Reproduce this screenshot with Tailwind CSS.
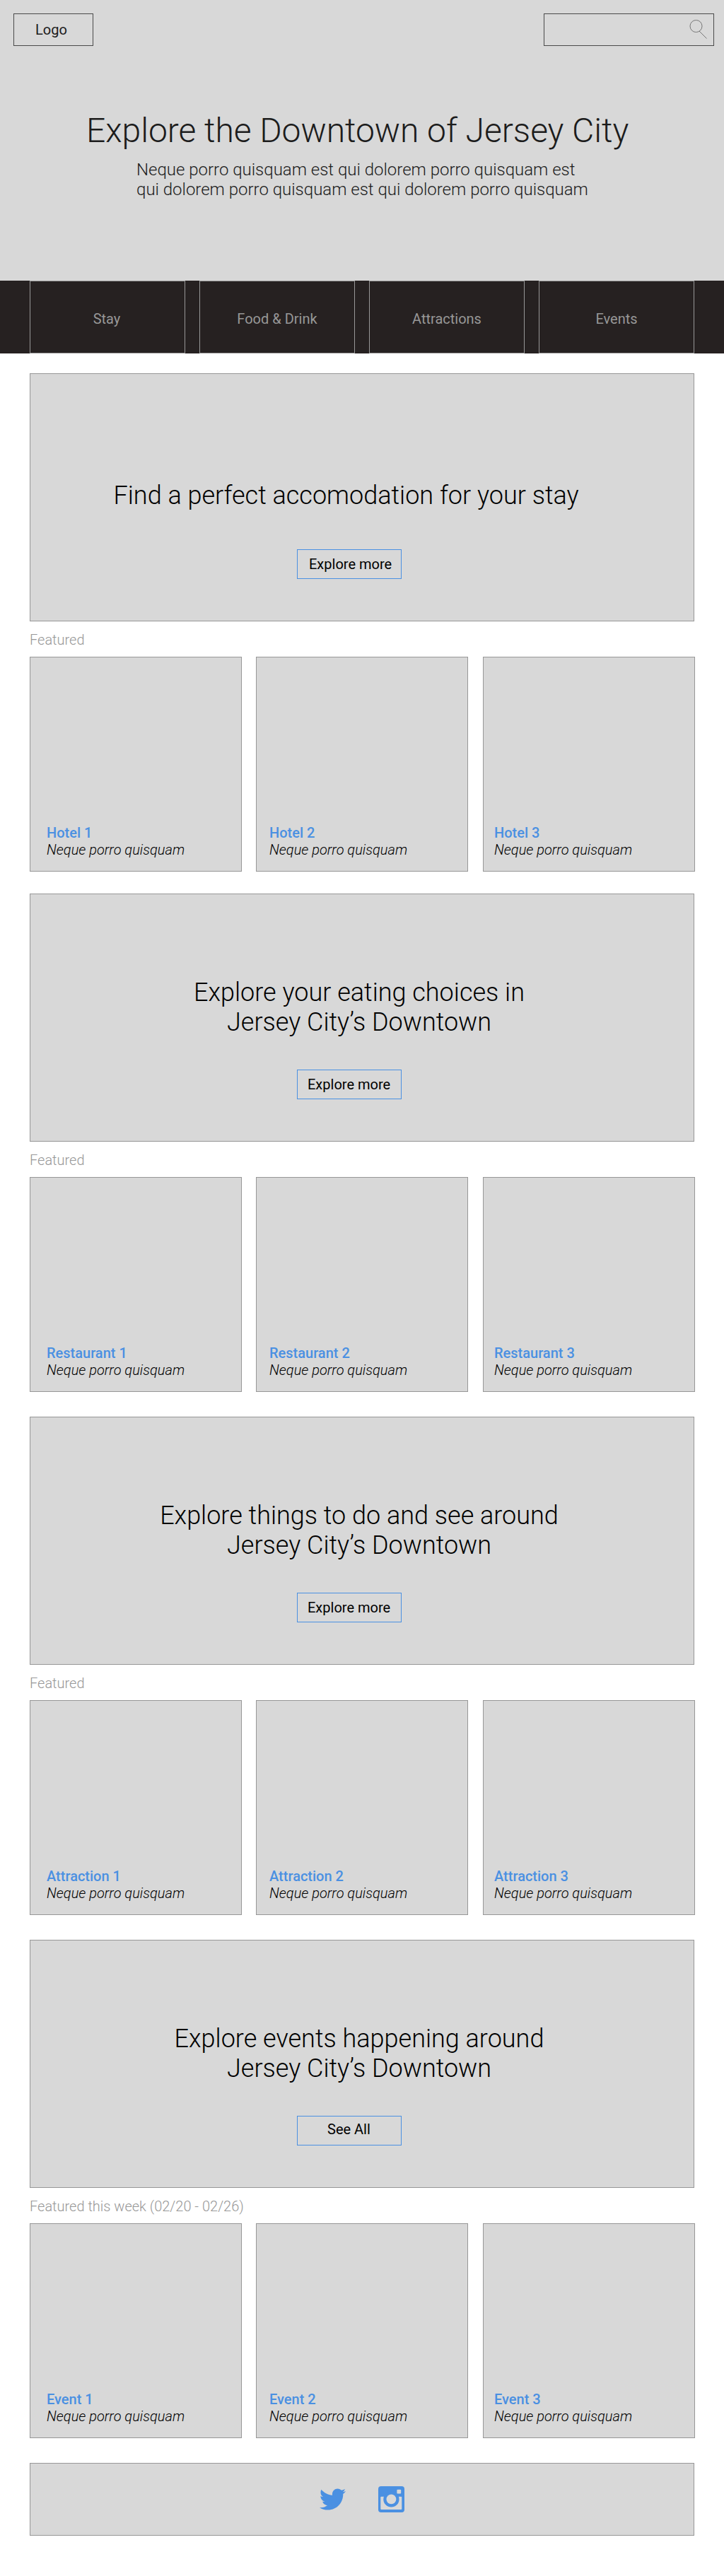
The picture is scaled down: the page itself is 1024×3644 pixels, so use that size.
<!DOCTYPE html>
<html lang="en">
<head>
<meta charset="utf-8">
<title>Explore the Downtown of Jersey City</title>
<script src="https://cdn.jsdelivr.net/npm/@tailwindcss/browser@4"></script>
</head>
<body class="w-[1024px] h-[3644px] bg-white font-['Roboto',sans-serif] text-xl leading-6 text-black">
  <header class="h-[397px] bg-[#d8d8d8] text-[#1c1c1c]">
    <div class="flex justify-between pt-[19px] pl-[19px] pr-[14px]">
      <a class="w-[113px] h-[46px] border border-[#4a4a4a] pl-[30px] pt-[10px]">Logo</a>
      <div class="w-[241px] h-[46px] border border-[#4a4a4a] flex justify-end pt-[7px] pr-[8px]">
        <svg class="w-[27px] h-[29px]" viewBox="0 0 27 29" fill="none" stroke="#777" stroke-width="1"><circle cx="10.5" cy="10" r="8.5"/><path d="M15 17 25.5 27.5"/></svg>
      </div>
    </div>
    <h1 class="mt-[92px] pl-[122px] text-[48px] leading-[56px] font-light tracking-[-0.03px] whitespace-nowrap">Explore the Downtown of Jersey City</h1>
    <p class="mt-[13px] pl-[193px] text-2xl leading-7 font-light tracking-[-0.01px] whitespace-nowrap">Neque porro quisquam est qui dolorem porro quisquam est<br>qui dolorem porro quisquam est qui dolorem porro quisquam</p>
  </header>

  <nav class="h-[103px] bg-[#262121] px-[42px] grid grid-cols-4 gap-5 text-center text-[#979797]">
    <a class="border border-[#979797] pt-[41px] pr-[2px]">Stay</a>
    <a class="border border-[#979797] pt-[41px]">Food &amp; Drink</a>
    <a class="border border-[#979797] pt-[41px]">Attractions</a>
    <a class="border border-[#979797] pt-[41px]">Events</a>
  </nav>

  <main class="pl-[42px]">
    <section class="h-[736px] pt-[28px]">
      <div class="w-[940px] h-[351px] bg-[#d8d8d8] border border-[#979797] flex flex-col items-start">
        <h2 class="mt-[151px] ml-[117.5px] text-4xl leading-[42px] font-light whitespace-nowrap">Find a perfect accomodation for your stay</h2>
        <a class="mt-[55px] ml-[377px] w-[148px] h-[42px] border border-[#4a90e2] pt-[8px] pl-[16px]">Explore more</a>
      </div>
      <h3 class="mt-[14px] font-light text-[#979797]">Featured</h3>
      <div class="mt-[12px] flex">
        <article class="w-[300px] h-[304px] bg-[#d8d8d8] border border-[#979797] pt-[236px] pl-[23px]"><h4 class="font-medium text-[#4a90e2]">Hotel 1</h4><p class="font-light italic">Neque porro quisquam</p></article>
        <article class="ml-[20px] w-[300px] h-[304px] bg-[#d8d8d8] border border-[#979797] pt-[236px] pl-[18px]"><h4 class="font-medium text-[#4a90e2]">Hotel 2</h4><p class="font-light italic">Neque porro quisquam</p></article>
        <article class="ml-[21px] w-[300px] h-[304px] bg-[#d8d8d8] border border-[#979797] pt-[236px] pl-[15px]"><h4 class="font-medium text-[#4a90e2]">Hotel 3</h4><p class="font-light italic">Neque porro quisquam</p></article>
      </div>
    </section>

    <section class="h-[740px] pt-[28px]">
      <div class="w-[940px] h-[351px] bg-[#d8d8d8] border border-[#979797] flex flex-col items-start">
        <h2 class="mt-[118px] w-[930px] text-center text-4xl leading-[42px] font-light">Explore your eating choices in<br>Jersey City’s Downtown</h2>
        <a class="mt-[46px] ml-[377px] w-[148px] h-[42px] border border-[#4a90e2] pt-[8px] pl-[14px]">Explore more</a>
      </div>
      <h3 class="mt-[14px] font-light text-[#979797]">Featured</h3>
      <div class="mt-[12px] flex">
        <article class="w-[300px] h-[304px] bg-[#d8d8d8] border border-[#979797] pt-[236px] pl-[23px]"><h4 class="font-medium text-[#4a90e2]">Restaurant 1</h4><p class="font-light italic">Neque porro quisquam</p></article>
        <article class="ml-[20px] w-[300px] h-[304px] bg-[#d8d8d8] border border-[#979797] pt-[236px] pl-[18px]"><h4 class="font-medium text-[#4a90e2]">Restaurant 2</h4><p class="font-light italic">Neque porro quisquam</p></article>
        <article class="ml-[21px] w-[300px] h-[304px] bg-[#d8d8d8] border border-[#979797] pt-[236px] pl-[15px]"><h4 class="font-medium text-[#4a90e2]">Restaurant 3</h4><p class="font-light italic">Neque porro quisquam</p></article>
      </div>
    </section>

    <section class="h-[740px] pt-[28px]">
      <div class="w-[940px] h-[351px] bg-[#d8d8d8] border border-[#979797] flex flex-col items-start">
        <h2 class="mt-[118px] w-[930px] text-center text-4xl leading-[42px] font-light">Explore things to do and see around<br>Jersey City’s Downtown</h2>
        <a class="mt-[46px] ml-[377px] w-[148px] h-[42px] border border-[#4a90e2] pt-[8px] pl-[14px]">Explore more</a>
      </div>
      <h3 class="mt-[14px] font-light text-[#979797]">Featured</h3>
      <div class="mt-[12px] flex">
        <article class="w-[300px] h-[304px] bg-[#d8d8d8] border border-[#979797] pt-[236px] pl-[23px]"><h4 class="font-medium text-[#4a90e2]">Attraction 1</h4><p class="font-light italic">Neque porro quisquam</p></article>
        <article class="ml-[20px] w-[300px] h-[304px] bg-[#d8d8d8] border border-[#979797] pt-[236px] pl-[18px]"><h4 class="font-medium text-[#4a90e2]">Attraction 2</h4><p class="font-light italic">Neque porro quisquam</p></article>
        <article class="ml-[21px] w-[300px] h-[304px] bg-[#d8d8d8] border border-[#979797] pt-[236px] pl-[15px]"><h4 class="font-medium text-[#4a90e2]">Attraction 3</h4><p class="font-light italic">Neque porro quisquam</p></article>
      </div>
    </section>

    <section class="h-[740px] pt-[28px]">
      <div class="w-[940px] h-[351px] bg-[#d8d8d8] border border-[#979797] flex flex-col items-start">
        <h2 class="mt-[118px] w-[930px] text-center text-4xl leading-[42px] font-light">Explore events happening around<br>Jersey City’s Downtown</h2>
        <a class="mt-[46px] ml-[377px] w-[148px] h-[42px] border border-[#4a90e2] pt-[6px] pl-[42px]">See All</a>
      </div>
      <h3 class="mt-[14px] font-light text-[#979797]">Featured this week (02/20 - 02/26)</h3>
      <div class="mt-[12px] flex">
        <article class="w-[300px] h-[304px] bg-[#d8d8d8] border border-[#979797] pt-[236px] pl-[23px]"><h4 class="font-medium text-[#4a90e2]">Event 1</h4><p class="font-light italic">Neque porro quisquam</p></article>
        <article class="ml-[20px] w-[300px] h-[304px] bg-[#d8d8d8] border border-[#979797] pt-[236px] pl-[18px]"><h4 class="font-medium text-[#4a90e2]">Event 2</h4><p class="font-light italic">Neque porro quisquam</p></article>
        <article class="ml-[21px] w-[300px] h-[304px] bg-[#d8d8d8] border border-[#979797] pt-[236px] pl-[15px]"><h4 class="font-medium text-[#4a90e2]">Event 3</h4><p class="font-light italic">Neque porro quisquam</p></article>
      </div>
    </section>
  </main>

  <footer class="mt-[28px] ml-[42px] w-[940px] h-[103px] bg-[#d8d8d8] border border-[#979797] pt-[32px] pl-[409px] flex gap-[46px]">
    <svg class="w-[37px] h-[37px]" viewBox="0 0 24 24" fill="#4a90e2"><path d="M23.954 4.569c-.885.389-1.83.654-2.825.775 1.014-.611 1.794-1.574 2.163-2.723-.951.555-2.005.959-3.127 1.184-.896-.959-2.173-1.559-3.591-1.559-2.717 0-4.92 2.203-4.92 4.917 0 .39.045.765.127 1.124C7.691 8.094 4.066 6.13 1.64 3.161c-.427.722-.666 1.561-.666 2.475 0 1.71.87 3.213 2.188 4.096-.807-.026-1.566-.248-2.228-.616v.061c0 2.385 1.693 4.374 3.946 4.827-.413.111-.849.171-1.296.171-.314 0-.615-.03-.916-.086.631 1.953 2.445 3.377 4.604 3.417-1.68 1.319-3.809 2.105-6.102 2.105-.39 0-.779-.023-1.17-.067 2.189 1.394 4.768 2.209 7.557 2.209 9.054 0 13.999-7.496 13.999-13.985 0-.209 0-.42-.015-.63.961-.689 1.8-1.56 2.46-2.548z"/></svg>
    <svg class="w-[37px] h-[37px]" viewBox="0 0 37 37"><rect width="37" height="37" rx="4" fill="#4a90e2"/><rect x="3.3" y="14.8" width="30" height="18.2" rx="1" fill="#d8d8d8"/><circle cx="18.4" cy="18.4" r="11.1" fill="#4a90e2"/><circle cx="18.4" cy="18.4" r="6.9" fill="#d8d8d8"/><rect x="26.4" y="4.7" width="5.8" height="5.8" rx="1" fill="#d8d8d8"/></svg>
  </footer>
</body>
</html>
